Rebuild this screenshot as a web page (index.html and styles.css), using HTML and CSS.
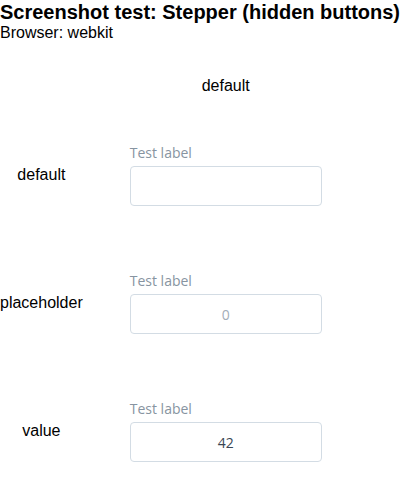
FILE: index.html
```html
<!DOCTYPE html>
<html>
<head>
<meta charset="utf-8">
<link rel="stylesheet" href="styles.css">
</head>
<body>
<h1 class="title">Screenshot test: Stepper (hidden buttons)</h1>
<p class="browser">Browser: webkit</p>
<table class="grid">
  <thead>
    <tr><th class="corner"></th><th class="colhead">default</th></tr>
  </thead>
  <tbody>
    <tr>
      <td class="rowhead">default</td>
      <td class="cell">
        <div class="field">
          <label class="field-label">Test label</label>
          <input class="stepper" type="text" value="">
        </div>
      </td>
    </tr>
    <tr>
      <td class="rowhead">placeholder</td>
      <td class="cell">
        <div class="field">
          <label class="field-label">Test label</label>
          <input class="stepper" type="text" placeholder="0">
        </div>
      </td>
    </tr>
    <tr>
      <td class="rowhead">value</td>
      <td class="cell">
        <div class="field">
          <label class="field-label">Test label</label>
          <input class="stepper" type="text" value="42">
        </div>
      </td>
    </tr>
  </tbody>
</table>
</body>
</html>
```

FILE: styles.css
```css
html, body {
  margin: 0;
  padding: 0;
  background: #ffffff;
  font-family: "Liberation Sans", Arial, sans-serif;
  color: #000000;
}
.title {
  margin: 0;
  font-size: 20px;
  line-height: 24px;
  font-weight: bold;
}
.browser {
  margin: 0;
  font-size: 16px;
  line-height: 18px;
}
.grid {
  border-collapse: collapse;
  margin-top: 19px;
}
.grid th, .grid td {
  padding: 0;
}
.colhead {
  font-weight: normal;
  font-size: 16px;
  line-height: 18px;
  height: 50px;
  text-align: center;
  vertical-align: middle;
  width: 286px;
}
.rowhead {
  font-size: 16px;
  text-align: center;
  vertical-align: middle;
  height: 128px;
}
.cell {
  vertical-align: middle;
  text-align: center;
}
.field {
  display: inline-flex;
  flex-direction: column;
  align-items: flex-start;
  width: 192px;
  gap: 4px;
  font-family: "Open Sans", sans-serif;
}
.field-label {
  font-size: 14px;
  line-height: 18px;
  color: #8794a1;
}
.stepper {
  box-sizing: border-box;
  width: 192px;
  height: 40px;
  margin: 0;
  border: 1px solid #d3dce4;
  border-radius: 4px;
  background: #ffffff;
  text-align: center;
  font-family: "Open Sans", sans-serif;
  font-size: 14px;
  color: #3a4653;
  outline: none;
  padding: 0 8px;
}
.stepper::placeholder {
  color: #a3adb8;
}
```
